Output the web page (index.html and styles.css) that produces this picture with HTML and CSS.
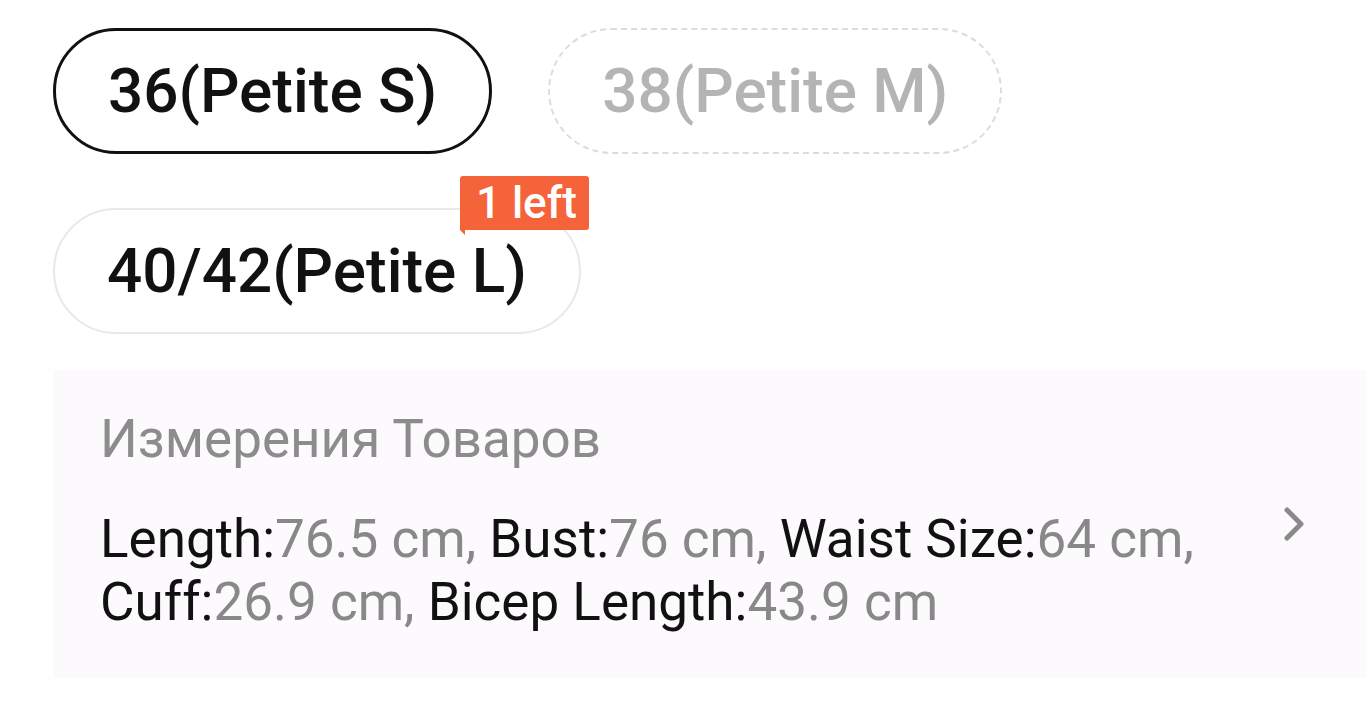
FILE: index.html
```html
<!DOCTYPE html>
<html lang="ru">
<head>
<meta charset="utf-8">
<title>Size</title>
<link rel="stylesheet" href="styles.css">
</head>
<body>
  <div class="sizes">
    <div class="chip chip-selected">36(Petite S)</div>
    <div class="chip chip-disabled">38(Petite M)</div>
    <div class="chip chip-normal">40/42(Petite L)<span class="badge">1 left</span></div>
  </div>
  <div class="measure">
    <div class="measure-text">
      <div class="measure-title">Измерения Товаров</div>
      <div class="measure-body"><span class="lbl">Length:</span><span class="val">76.5 cm, </span><span class="lbl">Bust:</span><span class="val">76 cm, </span><span class="lbl">Waist Size:</span><span class="val">64 cm, </span><span class="lbl">Cuff:</span><span class="val">26.9 cm, </span><span class="lbl">Bicep Length:</span><span class="val">43.9 cm</span></div>
    </div>
    <svg class="chev" width="24" height="36" viewBox="0 0 24 36"><path d="M5 4 L19 18 L5 32" fill="none" stroke="#8a8a8a" stroke-width="5" stroke-linecap="round" stroke-linejoin="round"/></svg>
  </div>
</body>
</html>
```
FILE: styles.css
```css
html, body {
  margin: 0;
  padding: 0;
  background: #ffffff;
}
body {
  font-family: Roboto, "Noto Sans", "Liberation Sans", sans-serif;
  width: 1366px;
  height: 708px;
  overflow: hidden;
}
.sizes {
  display: flex;
  flex-wrap: wrap;
  column-gap: 56px;
  row-gap: 54px;
  padding: 28px 300px 0 53px;
}
.chip {
  position: relative;
  box-sizing: border-box;
  height: 126px;
  padding: 0 52px;
  border-radius: 63px;
  display: flex;
  align-items: center;
  font-size: 62px;
  font-weight: 500;
  line-height: 1;
  white-space: nowrap;
}
.chip-selected {
  border: 3px solid #111111;
  color: #111111;
}
.chip-disabled {
  border: 2px dashed #dcdcdc;
  color: #b4b4b4;
}
.chip-normal {
  border: 2px solid #e8e8e8;
  color: #111111;
}
.badge {
  position: absolute;
  top: -34px;
  right: -10px;
  height: 54px;
  padding: 0 12px 0 16px;
  background: #f5633a;
  color: #ffffff;
  font-size: 44px;
  font-weight: 500;
  display: flex;
  align-items: center;
  border-radius: 3px 3px 3px 0;
}
.badge::after {
  content: "";
  position: absolute;
  left: 0;
  bottom: -5px;
  border-top: 5px solid #f5633a;
  border-left: 5px solid transparent;
}
.measure {
  margin: 36px 0 0 53px;
  background: #fdfafd;
  padding: 38px 60px 44px 47px;
  display: flex;
  align-items: flex-start;
  column-gap: 40px;
}
.measure-text {
  flex: 1;
}
.measure-title {
  font-size: 53px;
  line-height: 63px;
  color: #8c8c8c;
}
.measure-body {
  margin-top: 37px;
  font-size: 53px;
  line-height: 63px;
  padding-right: 30px;
}
.lbl {
  color: #111111;
}
.val {
  color: #888888;
}
.chev {
  margin-top: 98px;
  flex: none;
}
```
